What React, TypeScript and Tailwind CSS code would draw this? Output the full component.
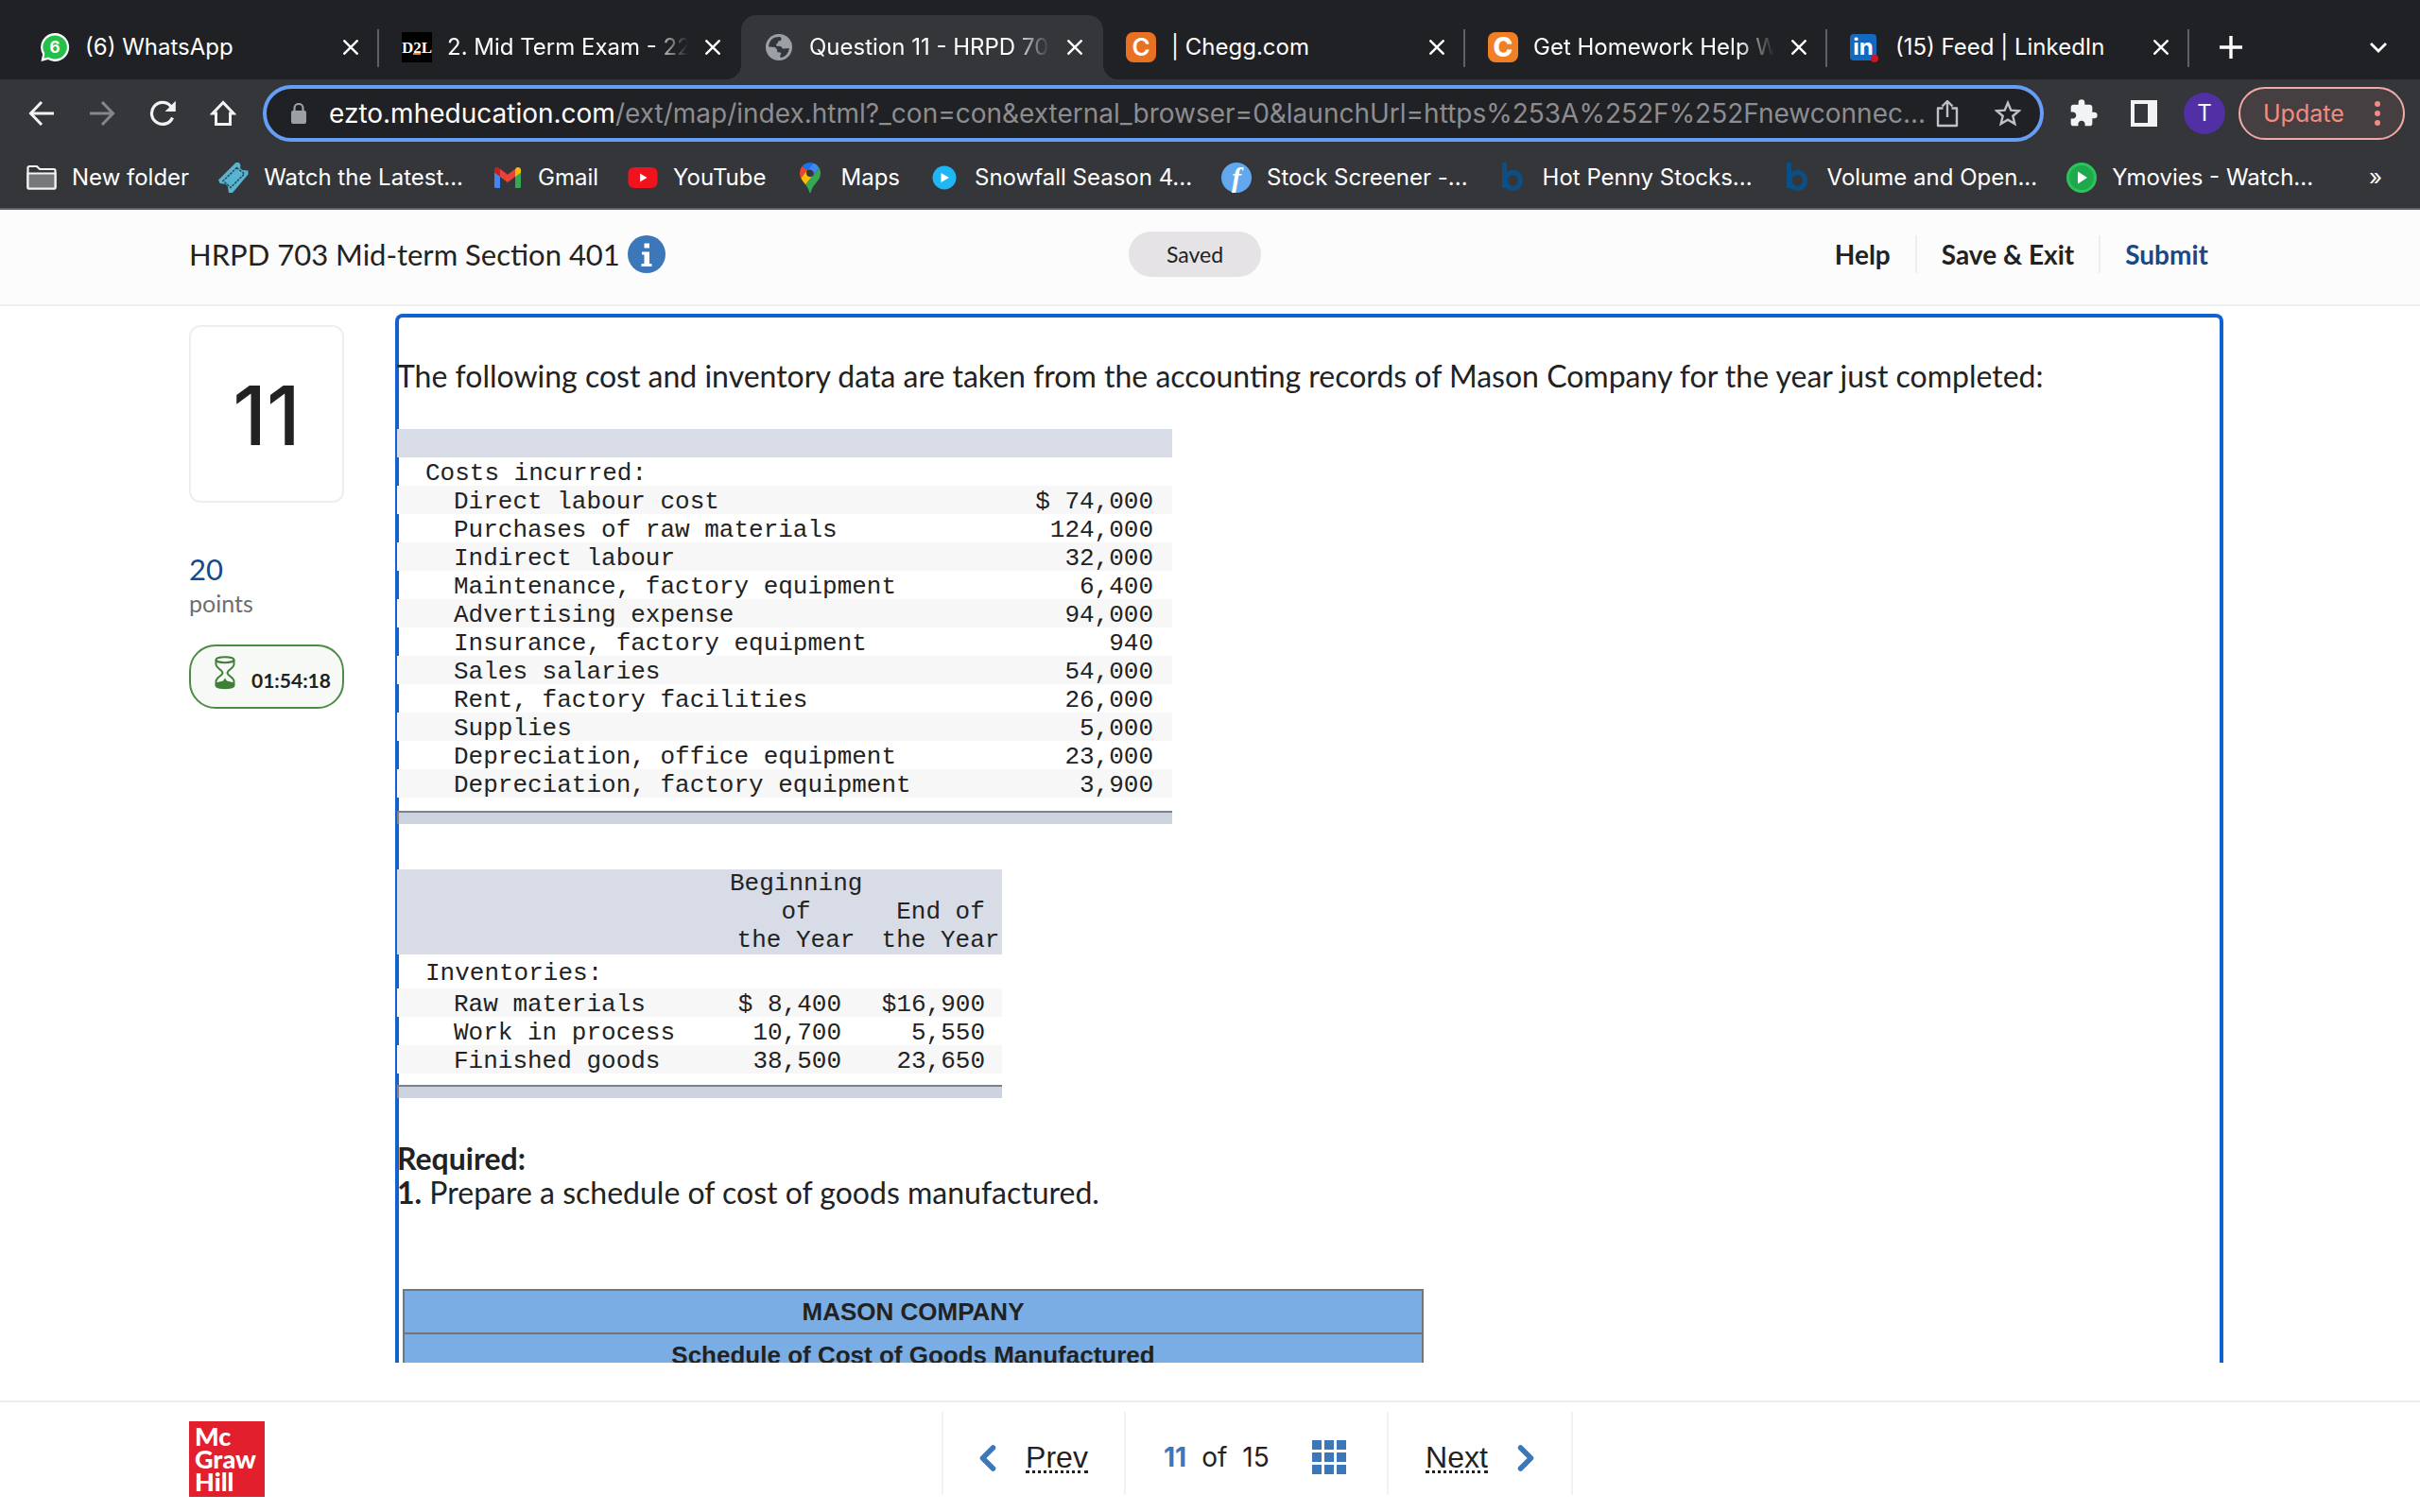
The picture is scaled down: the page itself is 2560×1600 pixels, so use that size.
import React from "react";

type IconProps = { className?: string };

const WhatsAppIcon = () => (
  <span className="relative flex size-8 shrink-0 items-center justify-center">
    <svg viewBox="0 0 32 32" className="absolute inset-0 size-8" aria-hidden="true">
      <path d="M16 1a15 15 0 0 0-12.900 22.500L1.500 31l7.300-1.900A15 15 0 1 0 16 1z" fill="#fff" />
      <path d="M16 3.400a12.600 12.600 0 0 0-10.700 19.200L4.400 27.800l4.900-1.300A12.600 12.600 0 1 0 16 3.400z" fill="#25c04b" />
    </svg>
    <span className="relative text-[17px] leading-none font-bold text-white">6</span>
  </span>
);

const D2LIcon = () => (
  <span className="relative flex size-8 shrink-0 items-center justify-center overflow-hidden bg-black font-['Liberation_Serif',serif] text-[17px] leading-none font-bold text-white">
    D2L
    <span className="absolute bottom-2 left-3 h-0.5 w-2 bg-[#f07d28]" />
  </span>
);

const GlobeIcon = () => (
  <svg viewBox="0 0 32 32" className="size-8 shrink-0" aria-hidden="true">
    <circle cx="16" cy="16" r="14" fill="#9aa0a6" />
    <path
      d="M5 15.500C5.300 11.500 7 8.500 9.500 6.800 11.500 5.300 14.500 4.600 17.500 5l1.200 2-.8 2-2.500.6-.9 2.400-1.500.8.500 1.900 4.500.3 2 2.400 6.800-.4c-.2 5-4 9.500-9.300 10l-.3-2.500 1.200-1.500-.8-1.500-3.200-.2-.5-3-2-2.300z"
      fill="#35363a"
    />
  </svg>
);

const CheggIcon = ({ bright }: { bright?: boolean }) => (
  <span
    className={
      bright
        ? "flex size-8 shrink-0 items-center justify-center rounded-lg bg-[#f18024] text-[28px] leading-none font-extrabold text-white"
        : "flex size-8 shrink-0 items-center justify-center rounded-lg bg-[#e87122] text-[26px] leading-none font-semibold text-white"
    }
  >
    C
  </span>
);

const LinkedInIcon = () => (
  <span className="relative flex size-8 shrink-0 items-center">
    <span className="flex size-7 items-end justify-center rounded-sm bg-[#1568bf] text-[24px] leading-[28px] font-bold text-white">in</span>
    <span className="absolute right-0.5 bottom-0 size-2 rounded-full bg-[#d11124]" />
  </span>
);

const CloseIcon = ({ className = "size-4" }: IconProps) => (
  <svg viewBox="0 0 16 16" className={className} fill="none" stroke="currentColor" strokeWidth="2.400" aria-hidden="true">
    <path d="M0.500 0.500 15.500 15.500M15.500 0.500 0.500 15.500" />
  </svg>
);

const tabs = [
  { title: "(6) WhatsApp", icon: <WhatsAppIcon />, sep: true },
  { title: "2. Mid Term Exam - 22F", icon: <D2LIcon />, fade: true },
  { title: "Question 11 - HRPD 703", icon: <GlobeIcon />, fade: true, active: true },
  { title: "| Chegg.com", icon: <CheggIcon />, sep: true },
  { title: "Get Homework Help Wi", icon: <CheggIcon bright />, fade: true, sep: true },
  { title: "(15) Feed | LinkedIn", icon: <LinkedInIcon />, sep: true },
];

function TabStrip() {
  return (
    <div className="flex h-[84px] items-end bg-[#202124] pl-[18px] text-white">
      <div role="tablist" className="flex min-w-0">
        {tabs.map((t) => (
          <div
            key={t.title}
            className={
              t.active
                ? "relative flex h-[68px] w-[383px] items-center rounded-t-2xl bg-[#35363a] pr-4 pl-6"
                : "relative flex h-[68px] w-[383px] items-center pr-4 pl-6"
            }
          >
            {t.active && (
              <>
                <span className="absolute bottom-0 -left-4 size-4 bg-[radial-gradient(circle_at_0_0,#202124_16px,#35363a_16px)]" />
                <span className="absolute -right-4 bottom-0 size-4 bg-[radial-gradient(circle_at_100%_0,#202124_16px,#35363a_16px)]" />
              </>
            )}
            {t.icon}
            <button
              role="tab"
              aria-selected={!!t.active}
              className={
                t.fade
                  ? "ml-4 min-w-0 flex-1 overflow-hidden text-left text-[24px] leading-8 whitespace-nowrap [mask-image:linear-gradient(to_right,black_85%,transparent)]"
                  : "ml-4 min-w-0 flex-1 overflow-hidden text-left text-[24px] leading-8 whitespace-nowrap"
              }
            >
              {t.title}
            </button>
            <button aria-label={"Close " + t.title} className="ml-3 flex size-7 shrink-0 items-center justify-center">
              <CloseIcon />
            </button>
            {t.sep && <span className="absolute top-[15px] right-0 h-10 w-0.5 bg-[#5f6064]" />}
          </div>
        ))}
      </div>
      <button aria-label="New tab" className="ml-[30px] flex h-[68px] w-7 items-center justify-center">
        <svg viewBox="0 0 24 24" className="size-6" stroke="currentColor" strokeWidth="3.400" aria-hidden="true">
          <path d="M12 0v24M0 12h24" />
        </svg>
      </button>
      <button aria-label="Search tabs" className="mr-7 ml-auto flex h-[68px] w-8 items-center justify-center">
        <svg viewBox="0 0 18 11" className="h-[11px] w-[18px]" fill="none" stroke="currentColor" strokeWidth="2.800" aria-hidden="true">
          <path d="M1 1l8 8 8-8" />
        </svg>
      </button>
    </div>
  );
}

function Toolbar() {
  return (
    <div className="flex h-[72px] items-center bg-[#35363a] pr-4 pl-3 text-[#f1f3f4]">
      <button aria-label="Back" className="flex w-16 justify-center">
        <svg viewBox="0 0 28 28" className="size-7" fill="none" stroke="currentColor" strokeWidth="3" aria-hidden="true">
          <path d="M27 14H3M14 2 2.500 14 14 26" />
        </svg>
      </button>
      <button aria-label="Forward" className="flex w-16 justify-center text-[#86878a]">
        <svg viewBox="0 0 28 28" className="size-7" fill="none" stroke="currentColor" strokeWidth="3" aria-hidden="true">
          <path d="M1 14h24M14 2l11.500 12L14 26" />
        </svg>
      </button>
      <button aria-label="Reload" className="flex w-16 justify-center">
        <svg viewBox="0 0 28 28" className="size-7" fill="none" stroke="currentColor" strokeWidth="3.200" aria-hidden="true">
          <path d="M24.500 18.500A11.500 11.500 0 1 1 22.500 6.200l3 3" />
          <path d="M27.800.8V12H16.600z" fill="currentColor" stroke="none" />
        </svg>
      </button>
      <button aria-label="Home" className="flex w-16 justify-center">
        <svg viewBox="0 0 28 28" className="size-7" fill="none" stroke="currentColor" strokeWidth="3" aria-hidden="true">
          <path d="M14 2.500 3 14h3.500v11.500h15V14H25z" />
        </svg>
      </button>
      <div className="ml-2.5 flex h-[60px] min-w-0 flex-1 items-center rounded-full border-4 border-[#669df6] bg-[#202124] pr-5 pl-[25px] text-[28px] leading-9">
        <svg viewBox="0 0 18 22" className="h-[22px] w-[18px] shrink-0" aria-hidden="true">
          <path d="M4.500 9V5.500a4.500 4.500 0 0 1 9 0V9" fill="none" stroke="#9aa0a6" strokeWidth="2.200" />
          <rect x="1" y="8" width="16" height="14" rx="2" fill="#9aa0a6" />
        </svg>
        <label htmlFor="address" className="ml-[23px] shrink-0 text-white">
          ezto.mheducation.com
        </label>
        <input
          id="address"
          type="text"
          defaultValue="/ext/map/index.html?_con=con&external_browser=0&launchUrl=https%253A%252F%252Fnewconnec..."
          className="min-w-0 flex-1 bg-transparent text-[#8c8d90] outline-none"
        />
        <button aria-label="Share" className="flex w-9 shrink-0 justify-center text-[#c0c1c4]">
          <svg viewBox="0 0 26 30" className="h-[30px] w-[26px]" fill="none" stroke="currentColor" strokeWidth="2.400" strokeLinejoin="round" aria-hidden="true">
            <path d="M8.500 9.500H3v18.500h20V9.500h-5.500M13 19V2.500M7.500 7.500 13 2l5.500 5.500" />
          </svg>
        </button>
        <button aria-label="Bookmark this tab" className="ml-8 flex w-7 shrink-0 justify-center text-[#c0c1c4]">
          <svg viewBox="0 0 28 28" className="size-7" fill="none" stroke="currentColor" strokeWidth="2.400" aria-hidden="true">
            <path d="M14 2.800l3.300 7.800 8.400.7-6.400 5.500 2 8.200L14 20.600 6.700 25l2-8.200-6.400-5.500 8.400-.7z" />
          </svg>
        </button>
      </div>
      <button aria-label="Extensions" className="ml-2.5 flex w-16 justify-center">
        <svg viewBox="0 0 24 24" className="size-8" fill="currentColor" aria-hidden="true">
          <path d="M20.500 11H19V7c0-1.100-.9-2-2-2h-4V3.500a2.500 2.500 0 0 0-5 0V5H4c-1.100 0-1.990.9-1.990 2v3.800H3.500c1.490 0 2.700 1.210 2.700 2.700s-1.210 2.700-2.700 2.700H2V20c0 1.100.9 2 2 2h3.800v-1.500c0-1.490 1.210-2.700 2.700-2.700 1.490 0 2.700 1.210 2.700 2.700V22H17c1.100 0 2-.9 2-2v-4h1.500a2.500 2.500 0 0 0 0-5z" />
        </svg>
      </button>
      <button aria-label="Side panel" className="flex w-16 justify-center">
        <span className="h-7 w-7 border-4 border-r-[10px] border-[#f1f3f4]" />
      </button>
      <button aria-label="Profile" className="flex w-16 justify-center">
        <span className="flex size-11 items-center justify-center rounded-full bg-[#5130a6] text-[24px] leading-none">T</span>
      </button>
      <button className="ml-1 flex h-14 w-44 items-center justify-between rounded-full border-2 border-[#f2aaa4] bg-[#463f42] px-6 text-[25px] leading-8 text-[#f28b82]">
        Update
        <span className="flex flex-col gap-1">
          <span className="size-1.5 rounded-full bg-[#f28b82]" />
          <span className="size-1.5 rounded-full bg-[#f28b82]" />
          <span className="size-1.5 rounded-full bg-[#f28b82]" />
        </span>
      </button>
    </div>
  );
}

const BIcon = () => (
  <svg viewBox="0 0 32 32" className="size-8" fill="none" aria-hidden="true">
    <path d="M7.500 0v27" stroke="#0b4f86" strokeWidth="5" />
    <ellipse cx="16.500" cy="19" rx="8" ry="8.500" stroke="#0b4f86" strokeWidth="5" />
  </svg>
);

const bookmarks = [
  {
    label: "New folder",
    icon: (
      <svg viewBox="0 0 32 32" className="size-8" aria-hidden="true">
        <path d="M1.500 5.500a1.500 1.500 0 0 1 1.500-1.500h8l3 3h15a1.500 1.500 0 0 1 1.500 1.500V26a1.500 1.500 0 0 1-1.500 1.500H3A1.500 1.500 0 0 1 1.500 26z" fill="#35363a" stroke="#f1f3f4" strokeWidth="2.200" />
        <path d="M1.500 11.500h29V26a1.500 1.500 0 0 1-1.500 1.500H3A1.500 1.500 0 0 1 1.500 26z" fill="#77787b" stroke="#f1f3f4" strokeWidth="2.200" />
      </svg>
    ),
  },
  {
    label: "Watch the Latest...",
    icon: (
      <svg viewBox="0 0 32 32" className="size-8" aria-hidden="true">
        <path d="M18.500 0h3.500l1.500 3-.5 3 2.500 2 6 .5v4L15 32h-4l-1-6.500L8 23l-6.500-1L0 18.500z" fill="#58b4d1" />
        <path d="M19.500 5.500l8 6.500L13 26.500l-8-7z" fill="none" stroke="#2c4a57" strokeWidth="1.600" strokeDasharray="2.500 1.200" />
      </svg>
    ),
  },
  {
    label: "Gmail",
    icon: (
      <svg viewBox="0 0 32 32" className="size-8" aria-hidden="true">
        <path d="M2 8v17.500A1.500 1.500 0 0 0 3.500 27H8V13z" fill="#4285f4" />
        <path d="M30 8v17.500a1.500 1.500 0 0 1-1.500 1.500H24V13z" fill="#34a853" />
        <path d="M24 7.500V15l6-4.500V8c0-2.600-2.900-4-5-2.500z" fill="#fbbc04" />
        <path d="M2 8v2.500L8 15V7.500L7 5.500C4.900 4 2 5.400 2 8z" fill="#c5221f" />
        <path d="M8 15V6.700l8 6 8-6V15l-8 6z" fill="#ea4335" />
      </svg>
    ),
  },
  {
    label: "YouTube",
    icon: (
      <svg viewBox="0 0 32 32" className="size-8" aria-hidden="true">
        <rect x="0.500" y="5" width="31" height="22" rx="6" fill="#f0121d" />
        <path d="M13 11.500v9l7.500-4.500z" fill="#fff" />
      </svg>
    ),
  },
  {
    label: "Maps",
    icon: (
      <svg viewBox="0 0 32 32" className="size-8" aria-hidden="true">
        <path d="M16 0c-3.400 0-6.300 1.500-8.300 3.800l5.300 4.500L19.500.6A11 11 0 0 0 16 0z" fill="#1a73e8" />
        <path d="M7.700 3.800A10.600 10.600 0 0 0 5 11c0 2.200.5 4 1.300 5.600L13 8.300z" fill="#ea4335" />
        <path d="M19.500.6 13 8.300a4.200 4.200 0 0 1 6.200 5.300l6.500-7.800A11 11 0 0 0 19.500.6z" fill="#4285f4" />
        <path d="M16 15.200A4.200 4.200 0 0 1 12.800 8.300l-6.500 8.300c1.200 2.500 3 4.500 4.800 6.800l8.100-9.800c-.8 1-1.900 1.600-3.200 1.600z" fill="#fbbc04" />
        <path d="M25.700 5.800 11.100 23.400c3 3.900 3.200 5 3.900 7.400.2.800.5 1.200 1 1.200s.8-.4 1-1.200c.8-2.600 1.100-4 4.500-8.200C24.500 19 27 16 27 11c0-1.900-.5-3.600-1.300-5.200z" fill="#34a853" />
      </svg>
    ),
  },
  {
    label: "Snowfall Season 4...",
    icon: (
      <svg viewBox="0 0 32 32" className="size-8" aria-hidden="true">
        <circle cx="16" cy="16" r="12.500" fill="#1fb6f5" />
        <path d="M12.500 11v10l8.500-5z" fill="#fff" />
      </svg>
    ),
  },
  {
    label: "Stock Screener -...",
    icon: (
      <span className="flex size-8 items-center justify-center rounded-full bg-[#62a8ee] font-['Liberation_Serif',serif] text-[30px] leading-8 font-bold text-white italic">
        f
      </span>
    ),
  },
  { label: "Hot Penny Stocks...", icon: <BIcon /> },
  { label: "Volume and Open...", icon: <BIcon /> },
  {
    label: "Ymovies - Watch...",
    icon: (
      <svg viewBox="0 0 32 32" className="size-8" aria-hidden="true">
        <circle cx="16" cy="16" r="16" fill="#2bc45c" />
        <circle cx="16" cy="16" r="13" fill="#1eaa4c" />
        <path d="M12 9.500v13L22 16z" fill="#fff" />
      </svg>
    ),
  },
];

function BookmarksBar() {
  return (
    <nav aria-label="Bookmarks" className="flex h-[66px] items-center gap-[31px] border-b-2 border-[#5f5d63] bg-[#35363a] pr-10 pl-7 text-[24px] leading-8 text-white">
      {bookmarks.map((b) => (
        <a key={b.label} href="#" className="flex items-center gap-4 whitespace-nowrap">
          {b.icon}
          {b.label}
        </a>
      ))}
      <button aria-label="More bookmarks" className="ml-auto">»</button>
    </nav>
  );
}

function ExamHeader() {
  return (
    <header className="relative flex h-[102px] items-center border-b-2 border-[#eeeeee] bg-[#fcfcfc] pr-[224px] pb-1.5 pl-[200px]">
      <h1 className="text-[31px] leading-9">HRPD 703 Mid-term Section 401</h1>
      <button aria-label="Information" className="ml-2 size-10 shrink-0">
        <svg viewBox="0 0 40 40" className="size-10" aria-hidden="true">
          <circle cx="20" cy="20" r="20" fill="#3b77b9" />
          <path d="M17.500 8.500h5.500v5h-5.500zM15 17.500h8V30h2.500v3H14.500v-3h3v-9.500H15z" fill="#fff" />
        </svg>
      </button>
      <span className="absolute left-[1194px] flex h-12 w-[140px] items-center justify-center rounded-full bg-[#e5e3e6] text-[23px] leading-8">Saved</span>
      <div className="ml-auto flex items-center divide-x-2 divide-[#eeeeee] text-[28px] leading-10 font-bold">
        <button className="pr-[26px]">Help</button>
        <button className="px-[26px]">Save &amp; Exit</button>
        <button className="pl-[26px] text-[#16498a]">Submit</button>
      </div>
    </header>
  );
}

function QuestionAside() {
  return (
    <aside className="mt-5 w-[164px] shrink-0">
      <div className="flex h-[188px] items-center justify-center rounded-xl border-2 border-[#eeeeee] pt-1 font-[Inter,sans-serif] text-[86px] leading-none font-medium">
        11
      </div>
      <p className="mt-[52px] text-[31px] leading-9 text-[#16498a]">20</p>
      <p className="text-[25px] leading-9 text-[#6e6e6e]">points</p>
      <div className="mt-[26px] flex h-[68px] items-center rounded-[28px] border-2 border-[#4b8b45] bg-[#f7f9f7] pl-6">
        <svg viewBox="0 0 24 36" className="mb-2 h-9 w-6" fill="none" stroke="#3f7f37" strokeWidth="2" aria-hidden="true">
          <path d="M2.500 4v5c0 4 7 6 7 9s-7 5-7 9v5M21.500 4v5c0 4-7 6-7 9s7 5 7 9v5" />
          <ellipse cx="12" cy="4.200" rx="9.500" ry="3" />
          <path d="M2 33v-4.500l8-2 2-3 2 3 8 2V33c-4 3-16 3-20 0z" fill="#3f7f37" stroke="none" />
        </svg>
        <span className="mt-2 ml-4 text-[21px] leading-7 font-bold">01:54:18</span>
      </div>
    </aside>
  );
}

const costs = [
  ["Direct labour cost", "$ 74,000"],
  ["Purchases of raw materials", "124,000"],
  ["Indirect labour", "32,000"],
  ["Maintenance, factory equipment", "6,400"],
  ["Advertising expense", "94,000"],
  ["Insurance, factory equipment", "940"],
  ["Sales salaries", "54,000"],
  ["Rent, factory facilities", "26,000"],
  ["Supplies", "5,000"],
  ["Depreciation, office equipment", "23,000"],
  ["Depreciation, factory equipment", "3,900"],
];

const inventories = [
  ["Raw materials", "$ 8,400", "$16,900"],
  ["Work in process", "10,700", "5,550"],
  ["Finished goods", "38,500", "23,650"],
];

const RuleBar = () => <div className="h-3.5 border-t-2 border-l-2 border-[#7b808c] bg-[#ccd2de]" />;

function CostsTable() {
  return (
    <div className="mt-[38px] w-[820px]">
      <table className="w-full font-['Courier_New','Liberation_Mono',monospace] text-[26px] leading-[26px]" aria-label="Costs incurred">
        <tbody>
          <tr className="h-[30px] bg-[#d8dce7]">
            <td colSpan={2} />
          </tr>
          <tr>
            <th scope="rowgroup" colSpan={2} className="p-0 pt-1 pl-[30px] text-left font-normal">Costs incurred:</th>
          </tr>
          {costs.map(([name, amount]) => (
            <tr key={name} className="odd:bg-[#f7f7f7]">
              <td className="p-0 pt-1 pl-[60px]">{name}</td>
              <td className="p-0 pt-1 pr-5 text-right whitespace-pre">{amount}</td>
            </tr>
          ))}
        </tbody>
      </table>
      <div className="pt-3.5">
        <RuleBar />
      </div>
    </div>
  );
}

function InventoriesTable() {
  return (
    <div className="mt-12 w-[640px]">
      <table className="w-full table-fixed font-['Courier_New','Liberation_Mono',monospace] text-[26px] leading-[26px]" aria-label="Inventories">
        <colgroup>
          <col />
          <col className="w-[156px]" />
          <col className="w-[140px]" />
        </colgroup>
        <thead className="bg-[#d8dce7] leading-[30px]">
          <tr>
            <td />
            <th scope="col" className="p-0 pr-2 pl-2 align-bottom font-normal">Beginning of<br />the Year</th>
            <th scope="col" className="p-0 pl-2.5 align-bottom font-normal">End of<br />the Year</th>
          </tr>
        </thead>
        <tbody>
          <tr className="h-9">
            <th scope="rowgroup" colSpan={3} className="p-0 pt-1 pl-[30px] text-left font-normal">Inventories:</th>
          </tr>
          {inventories.map(([name, begin, end]) => (
            <tr key={name} className="even:bg-[#f7f7f7]">
              <td className="p-0 pt-1 pl-[60px]">{name}</td>
              <td className="p-0 pt-1 pr-[30px] text-right whitespace-pre">{begin}</td>
              <td className="p-0 pt-1 pr-[18px] text-right">{end}</td>
            </tr>
          ))}
        </tbody>
      </table>
      <div className="pt-3">
        <RuleBar />
      </div>
    </div>
  );
}

function QuestionPanel() {
  return (
    <section className="mt-2 ml-[54px] min-w-0 flex-1 rounded-t-lg border-4 border-b-0 border-[#0f62d0]">
      <div className="-ml-0.5 pt-11 text-[32px] leading-9">
        <p>The following cost and inventory data are taken from the accounting records of Mason Company for the year just completed:</p>
        <CostsTable />
        <InventoriesTable />
        <p className="mt-[46px]">
          <b>Required:</b>
          <br />
          <b>1.</b> Prepare a schedule of cost of goods manufactured.
        </p>
        <table className="mt-[84px] ml-1.5 w-[1080px] border-collapse bg-[#7aade3] text-center font-['Liberation_Sans',Arial,sans-serif] text-[26px] leading-[44px] font-bold">
          <tbody>
            <tr>
              <th className="border-2 border-[#757575] p-0">MASON COMPANY</th>
            </tr>
            <tr>
              <th className="border-2 border-[#757575] p-0">Schedule of Cost of Goods Manufactured</th>
            </tr>
          </tbody>
        </table>
      </div>
    </section>
  );
}

const Chevron = ({ className }: IconProps) => (
  <svg viewBox="0 0 18 28" className={className} fill="none" stroke="#3b77b9" strokeWidth="5.500" strokeLinecap="round" strokeLinejoin="round" aria-hidden="true">
    <path d="M14.500 3 3.500 14l11 11" />
  </svg>
);

function ExamFooter() {
  return (
    <footer className="relative flex h-[118px] items-start justify-center border-t-2 border-[#eeeeee] pt-2.5">
      <div className="absolute top-5 left-[200px] flex size-20 flex-col bg-[#e21f2c] pt-1 pl-1.5 font-[Lato,sans-serif] text-[27px] leading-6 font-black text-white">
        <span>Mc</span>
        <span>Graw</span>
        <span>Hill</span>
      </div>
      <nav aria-label="Question navigation" className="ml-[100px] flex h-[88px] divide-x-2 divide-[#f2f2f2] border-x-2 border-[#f2f2f2] font-['Liberation_Sans',Arial,sans-serif] text-[32px] leading-9">
        <button className="flex w-[193px] items-center justify-center gap-[31px] pt-2.5">
          <Chevron className="h-7 w-[18px]" />
          <span className="border-b-[3px] border-dotted border-[#222222] leading-7">Prev</span>
        </button>
        <div className="flex w-[278px] items-center justify-between pt-2 pr-[43px] pl-10">
          <span className="flex gap-4 font-[Inter,sans-serif] text-[28px]">
            <b className="text-[#3b77b9]">11</b> <span>of</span> <span>15</span>
          </span>
          <button aria-label="Question list" className="grid grid-cols-3 gap-[3px]">
            {[0, 1, 2, 3, 4, 5, 6, 7, 8].map((n) => (
              <span key={n} className="size-2.5 bg-[#3b77b9]" />
            ))}
          </button>
        </div>
        <button className="flex w-[193px] items-center justify-center gap-[31px] pt-2.5">
          <span className="border-b-[3px] border-dotted border-[#222222] leading-7">Next</span>
          <Chevron className="h-7 w-[18px] rotate-180" />
        </button>
      </nav>
    </footer>
  );
}

export default function App() {
  return (
    <div className="flex h-screen flex-col overflow-hidden bg-white font-[Lato,sans-serif] text-[#222222]">
      <div className="shrink-0 font-[Inter,sans-serif]">
        <TabStrip />
        <Toolbar />
        <BookmarksBar />
      </div>
      <div className="shrink-0">
        <ExamHeader />
      </div>
      <main className="mb-10 flex min-h-0 flex-1 overflow-hidden pr-[208px] pl-[200px]">
        <QuestionAside />
        <QuestionPanel />
      </main>
      <div className="shrink-0">
        <ExamFooter />
      </div>
    </div>
  );
}
